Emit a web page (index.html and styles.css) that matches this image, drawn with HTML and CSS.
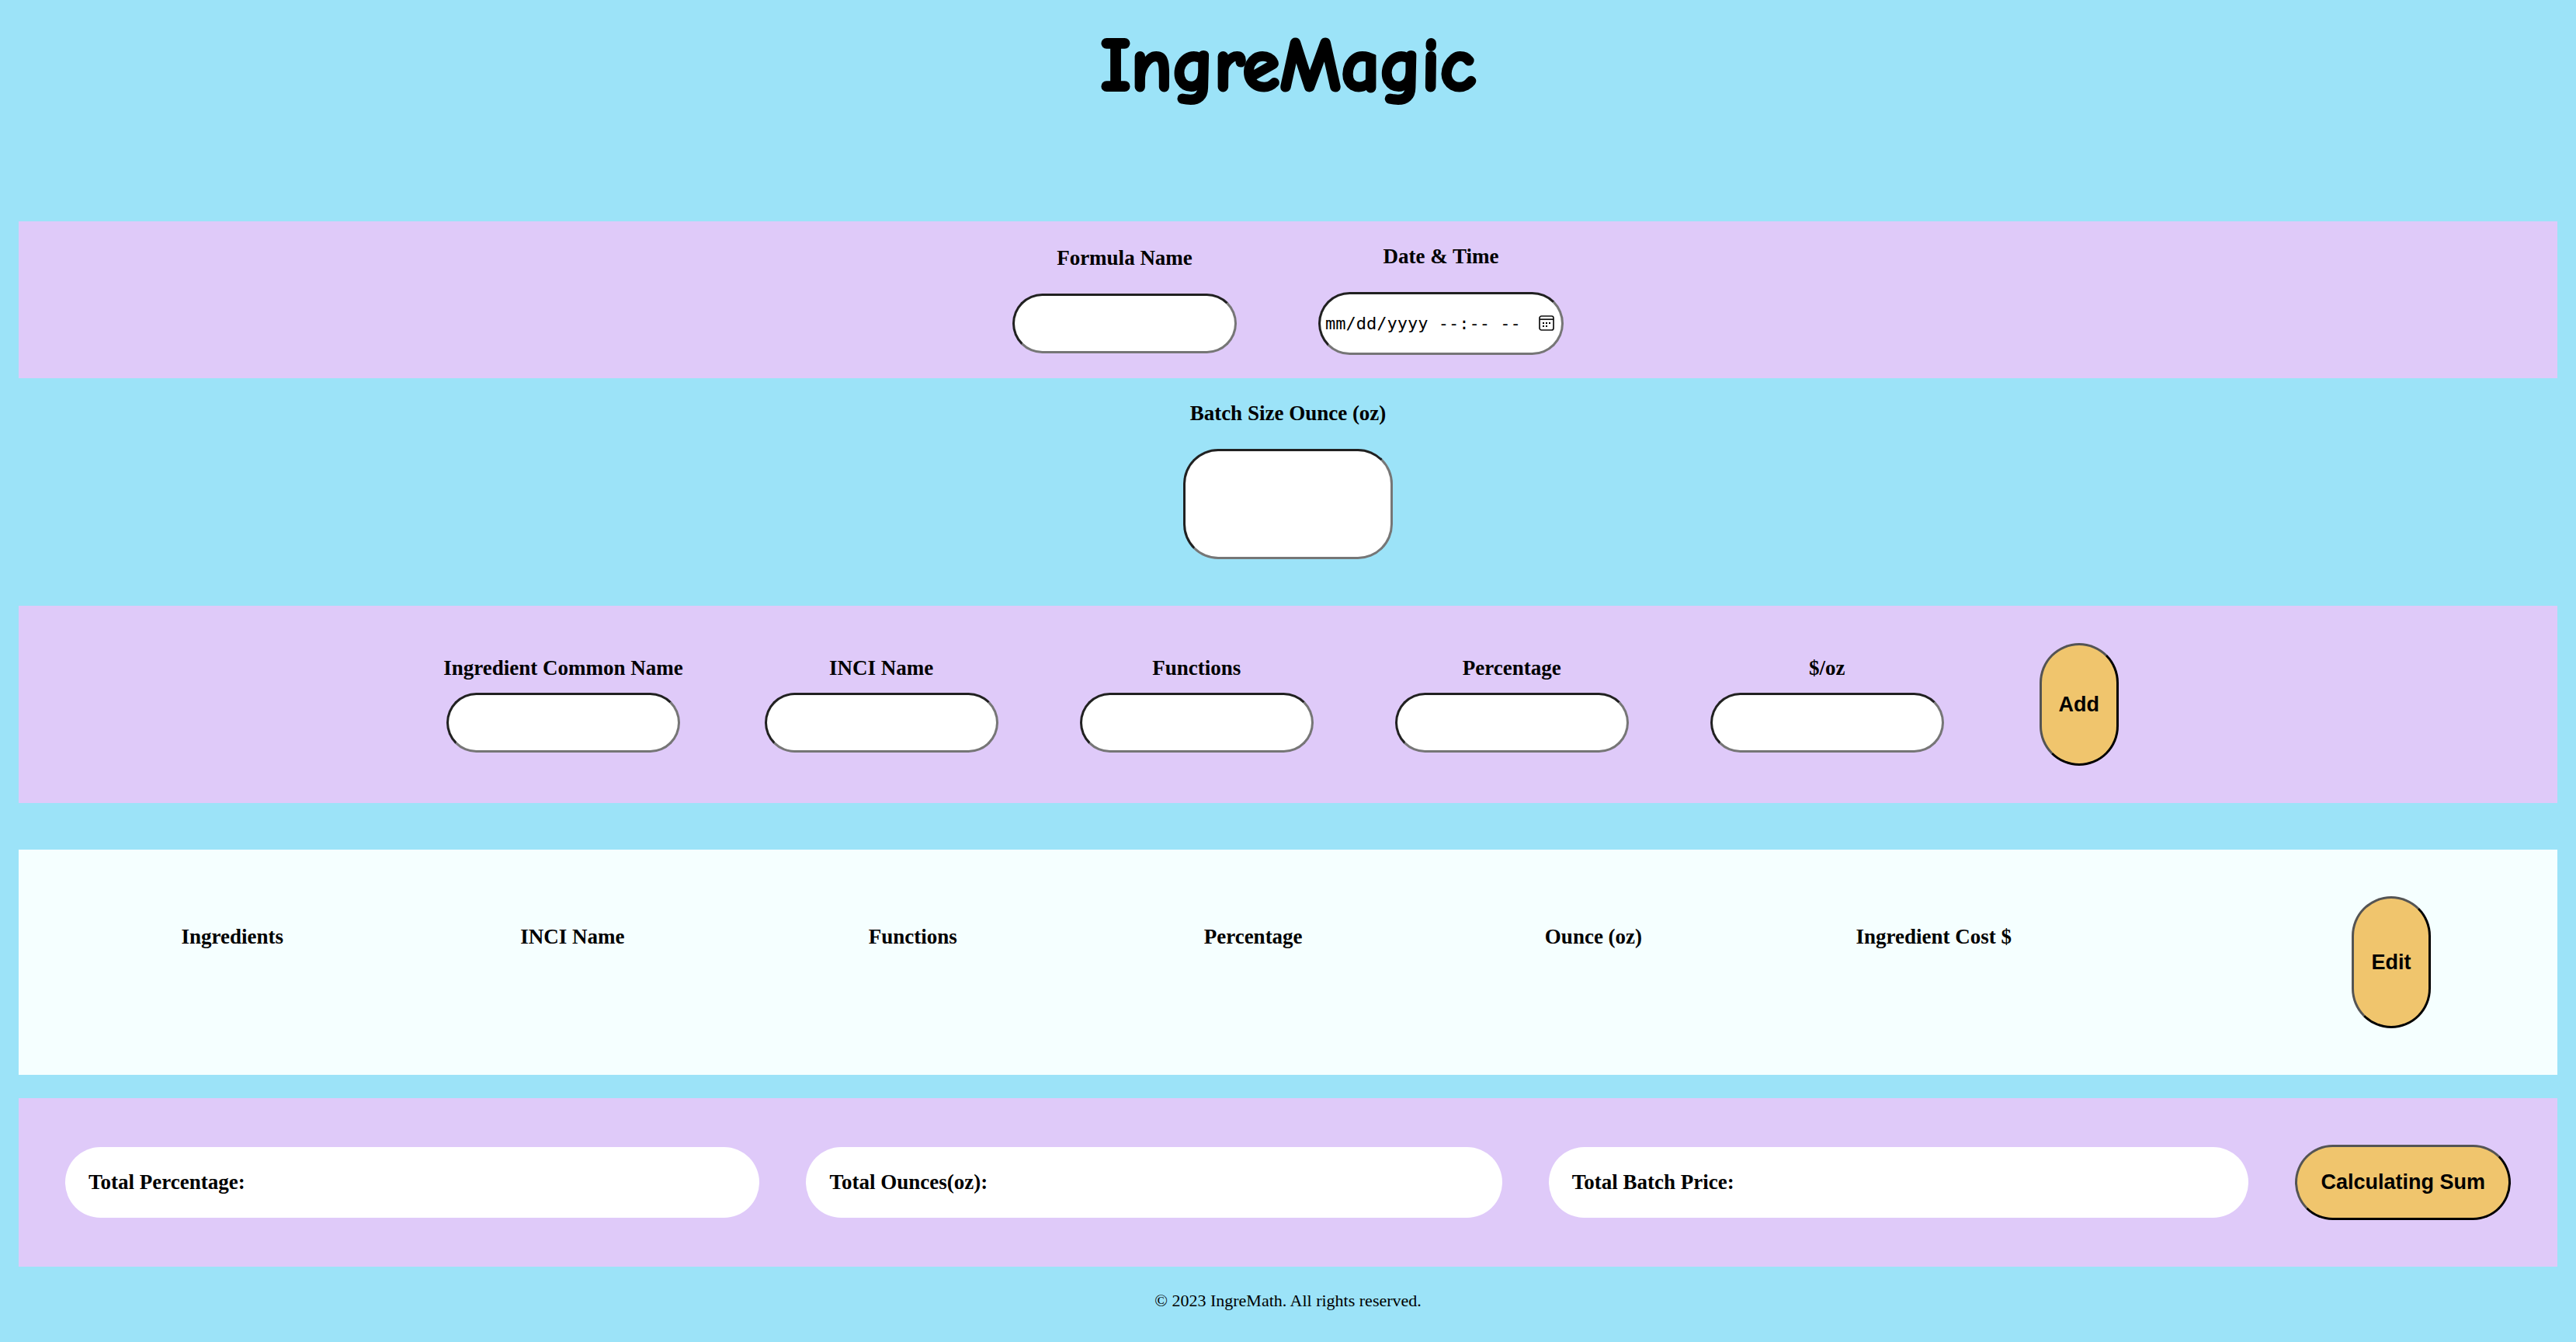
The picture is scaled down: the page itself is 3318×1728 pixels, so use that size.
FILE: index.html
```html
<!DOCTYPE html>
<html lang="en">
<head>
<meta charset="utf-8">
<title>IngreMagic</title>
<link rel="stylesheet" href="styles.css">
</head>
<body>
<header class="header"><h1 class="title">IngreMagic</h1></header>
<main>
  <section class="panel formula">
    <div class="field">
      <label for="formula-name">Formula Name</label>
      <input class="control name" id="formula-name" type="text">
    </div>
    <div class="field">
      <label for="date-time">Date &amp; Time</label>
      <div class="date-box">
        <input class="control date" id="date-time" type="text" placeholder="mm/dd/yyyy --:-- --">
        <svg class="calendar" viewBox="0 0 20 20" aria-hidden="true">
          <rect x="1" y="1" width="18" height="18" rx="2.5" fill="none" stroke="#111" stroke-width="1.7"/>
          <path d="M1 5.2h18" stroke="#111" stroke-width="1.7"/>
          <path d="M5 9h2v2H5zM9 9h2v2H9zM13 9h2v2h-2zM5 13h2v2H5zM9 13h2v2H9z" fill="#000"/>
        </svg>
      </div>
    </div>
  </section>
  <section class="batch">
    <label for="batch-size">Batch Size Ounce (oz)</label>
    <input class="control size" id="batch-size" type="text">
  </section>
  <section class="panel ingredient">
    <div class="field"><label for="common">Ingredient Common Name</label><input class="control" id="common" type="text"></div>
    <div class="field"><label for="inci">INCI Name</label><input class="control" id="inci" type="text"></div>
    <div class="field"><label for="functions">Functions</label><input class="control" id="functions" type="text"></div>
    <div class="field"><label for="percentage">Percentage</label><input class="control" id="percentage" type="text"></div>
    <div class="field"><label for="price">$/oz</label><input class="control" id="price" type="text"></div>
    <button class="button add" type="button">Add</button>
  </section>
  <section class="list">
    <table class="table">
      <thead>
        <tr><th scope="col">Ingredients</th><th scope="col">INCI Name</th><th scope="col">Functions</th><th scope="col">Percentage</th><th scope="col">Ounce (oz)</th><th scope="col">Ingredient Cost $</th></tr>
      </thead>
    </table>
    <button class="button edit" type="button">Edit</button>
  </section>
  <section class="panel totals">
    <div class="total">Total Percentage:</div>
    <div class="total">Total Ounces(oz):</div>
    <div class="total">Total Batch Price:</div>
    <button class="button sum" type="button">Calculating Sum</button>
  </section>
</main>
<footer class="footer">© 2023 IngreMath. All rights reserved.</footer>
</body>
</html>
```
FILE: styles.css
```css
* { box-sizing: border-box; }

body {
  margin: 0 24px;
  background: #9ce3f8;
  color: #000;
  font: bold 27px/31px "Liberation Serif", "Times New Roman", serif;
}

.header { height: 285px; padding-top: 16px; text-align: center; }

.title {
  margin: 0;
  font: 900 98px/138px "Comic Sans MS", "Comic Neue", cursive;
  -webkit-text-stroke: 4px #000;
  stroke-linejoin: round;
}

.panel {
  display: flex;
  justify-content: center;
  align-items: center;
  background: #dfcaf9;
}

.field {
  display: flex;
  flex-direction: column;
  align-items: center;
  gap: 16px;
}

.control {
  width: 301px;
  height: 77px;
  padding: 2px 6px;
  border: 3px inset #767676;
  border-radius: 45px;
  background: #fff;
  font: 22px "Liberation Sans", Arial, sans-serif;
}

.formula { gap: 105px; padding: 30px 0; }
.formula .field { gap: 30px; }
.name { width: 289px; }
.date-box { display: flex; position: relative; }
.date {
  width: 316px;
  height: 81px;
  font-family: "DejaVu Sans Mono", monospace;
}
.date::placeholder { color: #000; opacity: 1; }
.calendar {
  position: absolute;
  top: 30px;
  right: 12px;
  width: 20px;
  height: 20px;
}

.batch {
  display: flex;
  flex-direction: column;
  align-items: center;
  gap: 30px;
  padding: 30px 0 60px;
}
.size { width: 270px; height: 142px; }

.ingredient { gap: 105px; padding: 48px 0; }

.button {
  border: 3px outset #000;
  border-radius: 60px;
  background: #f0c56d;
  color: #000;
  font: bold 27px/31px "Liberation Sans", Arial, sans-serif;
}
.add { width: 102px; height: 158px; margin: 0 18px; padding: 0; }

.list {
  display: flex;
  justify-content: space-between;
  align-items: flex-start;
  margin: 60px 0 30px;
  padding: 60px 163px 60px 56px;
  background: #f5ffff;
}
.table {
  width: calc(100% - 421px);
  table-layout: fixed;
  border-collapse: collapse;
}
.table th { padding: 37px 0 0; text-align: center; }
.edit { width: 102px; height: 170px; padding: 0; }

.totals { gap: 60px; padding: 60px; }
.total {
  flex: 1 1 auto;
  padding: 30px;
  border-radius: 60px;
  background: #fff;
}
.sum { height: 97px; padding: 0 30px; white-space: nowrap; }

.footer {
  padding: 30px 0 40px;
  font-weight: normal;
  font-size: 22px;
  line-height: 27px;
  text-align: center;
}
```
